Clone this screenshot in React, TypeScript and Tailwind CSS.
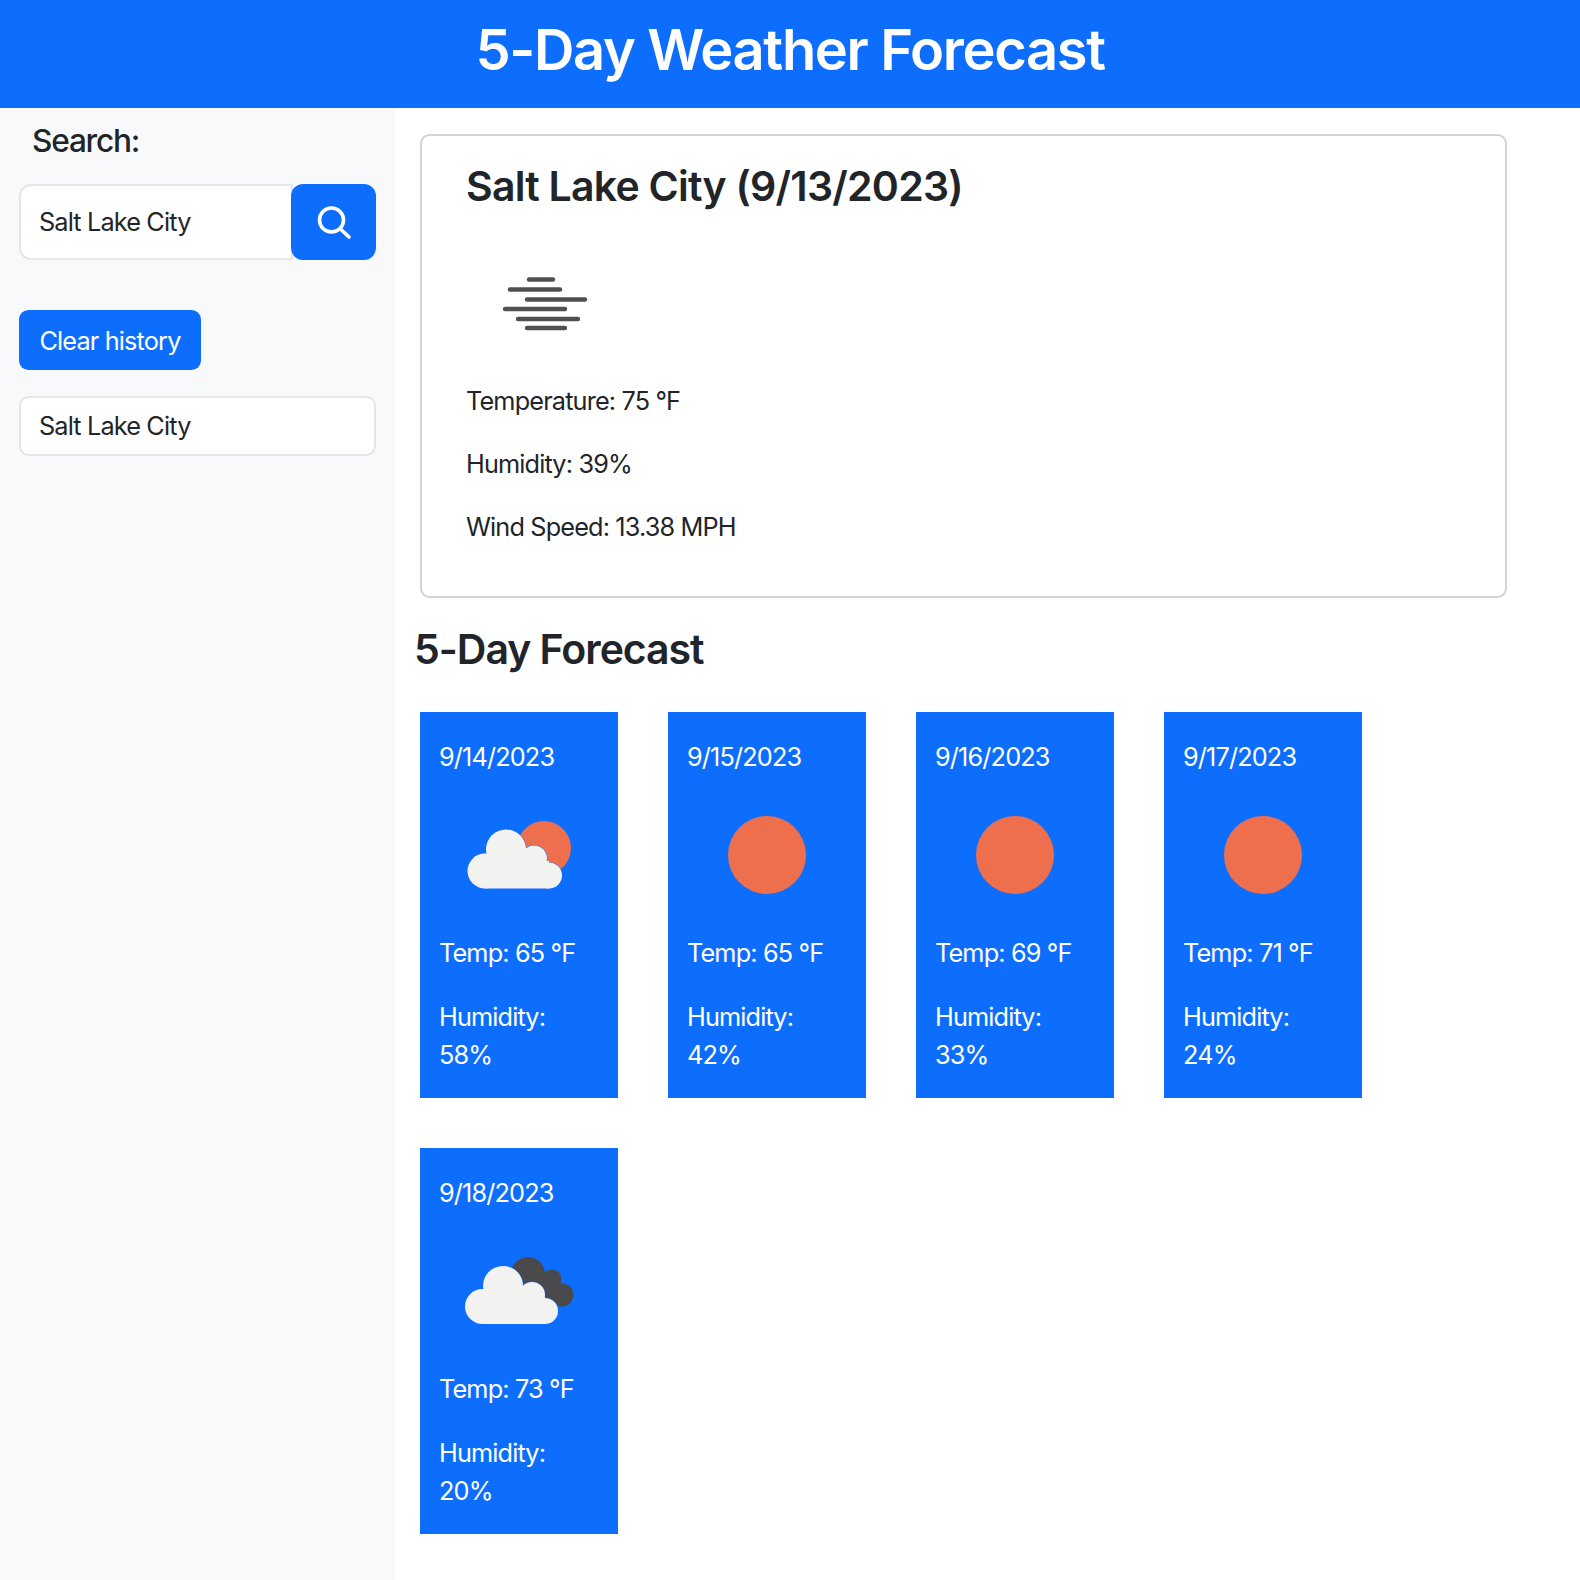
const forecast = [
  { date: "9/14/2023", temp: 65, humidity: 58, icon: "partly" },
  { date: "9/15/2023", temp: 65, humidity: 42, icon: "sun" },
  { date: "9/16/2023", temp: 69, humidity: 33, icon: "sun" },
  { date: "9/17/2023", temp: 71, humidity: 24, icon: "sun" },
  { date: "9/18/2023", temp: 73, humidity: 20, icon: "overcast" },
];

function Mist() {
  return (
    <svg viewBox="0 0 158 158" className="w-[158px] h-[158px] block">
      <g stroke="#505052" strokeWidth="4.4" strokeLinecap="round">
        <line x1="63" y1="55.5" x2="87" y2="55.5" />
        <line x1="44" y1="65.5" x2="94" y2="65.5" />
        <line x1="61" y1="75.5" x2="119" y2="75.5" />
        <line x1="39" y1="85" x2="99" y2="85" />
        <line x1="52" y1="95" x2="112" y2="95" />
        <line x1="61" y1="104" x2="99" y2="104" />
      </g>
    </svg>
  );
}

function Sun() {
  return (
    <svg viewBox="0 0 158 158" className="w-[158px] h-[158px] block">
      <circle cx="79" cy="79" r="39" fill="#ee6f4d" />
    </svg>
  );
}

function Partly() {
  return (
    <svg viewBox="0 0 158 158" className="w-[158px] h-[158px] block">
      <circle cx="104" cy="72" r="27" fill="#ee6f4d" />
      <g fill="#0d6efd" stroke="#0d6efd" strokeWidth="1">
        <circle cx="66" cy="73.5" r="20" />
        <circle cx="94" cy="82.5" r="13" />
        <circle cx="109" cy="99.5" r="13" />
      </g>
      <g fill="#f2f2f1">
        <circle cx="45" cy="95" r="17.5" />
        <circle cx="66" cy="73.5" r="20" />
        <circle cx="94" cy="82.5" r="13" />
        <circle cx="109" cy="99.5" r="13" />
        <rect x="45" y="85" width="64" height="27.5" />
      </g>
    </svg>
  );
}

function Overcast() {
  return (
    <svg viewBox="0 0 158 158" className="w-[158px] h-[158px] block">
      <g fill="#4a4a4d">
        <circle cx="88" cy="62" r="17" />
        <circle cx="112" cy="67" r="9.5" />
        <circle cx="122" cy="83" r="11.5" />
        <rect x="88" y="62" width="30" height="30" />
      </g>
      <g fill="#0d6efd" stroke="#0d6efd" strokeWidth="1">
        <circle cx="63" cy="74" r="20" />
        <circle cx="92" cy="83" r="13" />
        <circle cx="105" cy="99" r="13" />
      </g>
      <g fill="#f2f2f1">
        <circle cx="42.5" cy="94.5" r="17.5" />
        <circle cx="63" cy="74" r="20" />
        <circle cx="92" cy="83" r="13" />
        <circle cx="105" cy="99" r="13" />
        <rect x="42" y="85" width="63" height="27" />
      </g>
    </svg>
  );
}

export default function App() {
  return (
    <div className="w-[1580px] h-[1580px] bg-white text-[#212529] text-[25.28px] leading-[38px] tracking-[-0.85px] font-['Inter',sans-serif] overflow-hidden">
      <header className="h-[108px] bg-[#0d6efd] text-white flex items-center justify-center pb-[8px]">
        <h1 className="text-[56px] font-semibold tracking-[-1.35px] leading-none">5-Day Weather Forecast</h1>
      </header>

      <div className="flex">
        <aside className="w-[395px] h-[1472px] bg-[#f8f9fa] px-[19px]">
          <h5 className="pl-[13px] pt-[14px] text-[31.6px] leading-[38px] tracking-[-1.2px] font-medium">Search:</h5>
          <div className="mt-[24px] flex">
            <input
              readOnly
              value="Salt Lake City"
              className="w-[274px] h-[76px] bg-white border-2 border-[#e3e5e8] rounded-l-[12px] px-[18px] outline-none"
            />
            <button className="-ml-[2px] w-[85px] h-[76px] bg-[#0d6efd] rounded-[12px] flex items-center justify-center">
              <svg viewBox="0 0 36 36" className="w-[36px] h-[36px]" fill="none" stroke="#fff" strokeWidth="3.6" strokeLinecap="round">
                <circle cx="15.5" cy="16" r="12" />
                <line x1="24.5" y1="25" x2="33" y2="33" />
              </svg>
            </button>
          </div>
          <button className="mt-[50px] block w-[182px] h-[60px] pt-px bg-[#0d6efd] text-white rounded-[9.5px]">Clear history</button>
          <button className="mt-[26px] block w-[357px] h-[60px] bg-white border-2 border-[#e3e5e8] rounded-[9.5px] px-[18px] text-left">
            Salt Lake City
          </button>
        </aside>

        <main className="flex-1 pl-[25px]">
          <section className="mt-[26px] w-[1087px] h-[464px] border-2 border-[#d3d4d6] rounded-[9.5px] pl-[44px] pt-[25px]">
            <h3 className="text-[41px] font-semibold tracking-[-0.75px] leading-[50px]">Salt Lake City (9/13/2023)</h3>
            <div className="mt-[13px]">
              <Mist />
            </div>
            <p>Temperature: 75 °F</p>
            <p className="mt-[25px]">Humidity: 39%</p>
            <p className="mt-[25px]">Wind Speed: 13.38 MPH</p>
          </section>

          <h2 className="-ml-[6px] mt-[26px] text-[41px] font-semibold tracking-[-1.03px] leading-[50px]">5-Day Forecast</h2>

          <div className="mt-[38px] flex flex-wrap w-[1100px] gap-x-[50px] gap-y-[50.5px]">
            {forecast.map((day) => (
              <div key={day.date} className="w-[198px] h-[385.5px] bg-[#0d6efd] text-white px-[19px] pt-[26px]">
                <p>{day.date}</p>
                <div className="h-[158px] ml-[1px]">
                  {day.icon === "partly" && <Partly />}
                  {day.icon === "sun" && <Sun />}
                  {day.icon === "overcast" && <Overcast />}
                </div>
                <p>Temp: {day.temp} °F</p>
                <p className="mt-[26px]">Humidity: {day.humidity}%</p>
              </div>
            ))}
          </div>
        </main>
      </div>
    </div>
  );
}
